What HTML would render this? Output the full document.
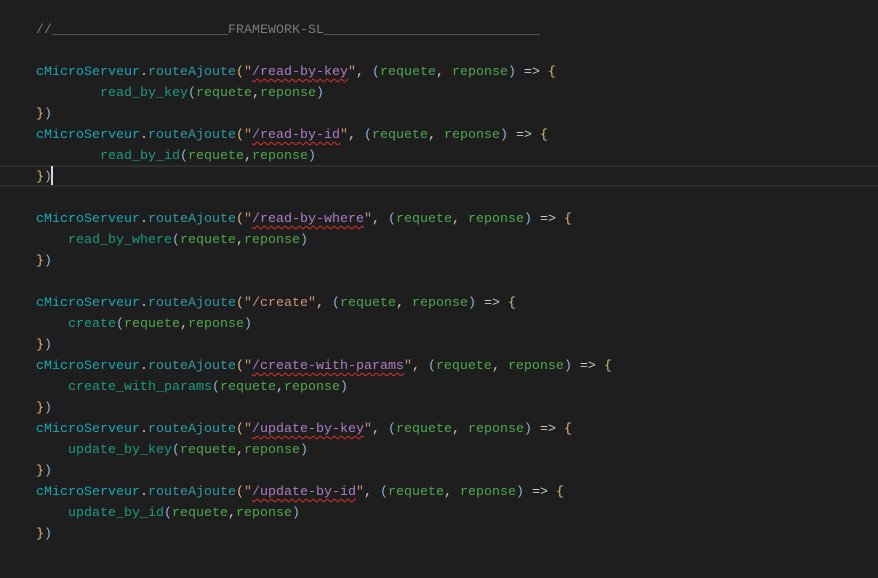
<!DOCTYPE html><html><head><style>
body{margin:0;background:#1e1e1e;width:878px;height:578px;overflow:hidden}
pre{margin:0;position:absolute;left:36px;top:20px;font-family:"Liberation Mono",monospace;font-size:13.33px;line-height:21px;color:#d4d4d4}
.c{color:#7a7a7a}.a{color:#17a8b8}.f{color:#2c9da8}.d{color:#cccccc}.y{color:#d7ba7d}.b{color:#8ab4d8}
.s{color:#ce9178}.p{color:#b07cc6;text-decoration:underline wavy #e0302a;text-decoration-thickness:1px;text-underline-offset:3px}
.g{color:#4ea84e}.t{color:#1a9c84}
.hl{position:absolute;left:0;width:878px;top:165px;height:18px;border-top:2px solid #2e2e2e;border-bottom:2px solid #2e2e2e}
.cur{position:absolute;left:51px;top:166px;width:2px;height:19px;background:#d8d8d8}
</style></head><body>
<div class="hl"></div><div class="cur"></div>
<pre><span class="c">//______________________FRAMEWORK-SL___________________________</span>

<span class="a">cMicroServeur</span><span class="d">.</span><span class="f">routeAjoute</span><span class="y">(</span><span class="s">"</span><span class="p">/read-by-key</span><span class="s">"</span><span class="d">, </span><span class="b">(</span><span class="g">requete</span><span class="d">, </span><span class="g">reponse</span><span class="b">)</span><span class="d"> =&gt; </span><span class="y">{</span>
        <span class="t">read_by_key</span><span class="b">(</span><span class="g">requete</span><span class="d">,</span><span class="g">reponse</span><span class="b">)</span>
<span class="y">}</span><span class="b">)</span>
<span class="a">cMicroServeur</span><span class="d">.</span><span class="f">routeAjoute</span><span class="y">(</span><span class="s">"</span><span class="p">/read-by-id</span><span class="s">"</span><span class="d">, </span><span class="b">(</span><span class="g">requete</span><span class="d">, </span><span class="g">reponse</span><span class="b">)</span><span class="d"> =&gt; </span><span class="y">{</span>
        <span class="t">read_by_id</span><span class="b">(</span><span class="g">requete</span><span class="d">,</span><span class="g">reponse</span><span class="b">)</span>
<span class="y">}</span><span class="b">)</span>

<span class="a">cMicroServeur</span><span class="d">.</span><span class="f">routeAjoute</span><span class="y">(</span><span class="s">"</span><span class="p">/read-by-where</span><span class="s">"</span><span class="d">, </span><span class="b">(</span><span class="g">requete</span><span class="d">, </span><span class="g">reponse</span><span class="b">)</span><span class="d"> =&gt; </span><span class="y">{</span>
    <span class="t">read_by_where</span><span class="b">(</span><span class="g">requete</span><span class="d">,</span><span class="g">reponse</span><span class="b">)</span>
<span class="y">}</span><span class="b">)</span>

<span class="a">cMicroServeur</span><span class="d">.</span><span class="f">routeAjoute</span><span class="y">(</span><span class="s">"/create"</span><span class="d">, </span><span class="b">(</span><span class="g">requete</span><span class="d">, </span><span class="g">reponse</span><span class="b">)</span><span class="d"> =&gt; </span><span class="y">{</span>
    <span class="t">create</span><span class="b">(</span><span class="g">requete</span><span class="d">,</span><span class="g">reponse</span><span class="b">)</span>
<span class="y">}</span><span class="b">)</span>
<span class="a">cMicroServeur</span><span class="d">.</span><span class="f">routeAjoute</span><span class="y">(</span><span class="s">"</span><span class="p">/create-with-params</span><span class="s">"</span><span class="d">, </span><span class="b">(</span><span class="g">requete</span><span class="d">, </span><span class="g">reponse</span><span class="b">)</span><span class="d"> =&gt; </span><span class="y">{</span>
    <span class="t">create_with_params</span><span class="b">(</span><span class="g">requete</span><span class="d">,</span><span class="g">reponse</span><span class="b">)</span>
<span class="y">}</span><span class="b">)</span>
<span class="a">cMicroServeur</span><span class="d">.</span><span class="f">routeAjoute</span><span class="y">(</span><span class="s">"</span><span class="p">/update-by-key</span><span class="s">"</span><span class="d">, </span><span class="b">(</span><span class="g">requete</span><span class="d">, </span><span class="g">reponse</span><span class="b">)</span><span class="d"> =&gt; </span><span class="y">{</span>
    <span class="t">update_by_key</span><span class="b">(</span><span class="g">requete</span><span class="d">,</span><span class="g">reponse</span><span class="b">)</span>
<span class="y">}</span><span class="b">)</span>
<span class="a">cMicroServeur</span><span class="d">.</span><span class="f">routeAjoute</span><span class="y">(</span><span class="s">"</span><span class="p">/update-by-id</span><span class="s">"</span><span class="d">, </span><span class="b">(</span><span class="g">requete</span><span class="d">, </span><span class="g">reponse</span><span class="b">)</span><span class="d"> =&gt; </span><span class="y">{</span>
    <span class="t">update_by_id</span><span class="b">(</span><span class="g">requete</span><span class="d">,</span><span class="g">reponse</span><span class="b">)</span>
<span class="y">}</span><span class="b">)</span></pre>
</body></html>
